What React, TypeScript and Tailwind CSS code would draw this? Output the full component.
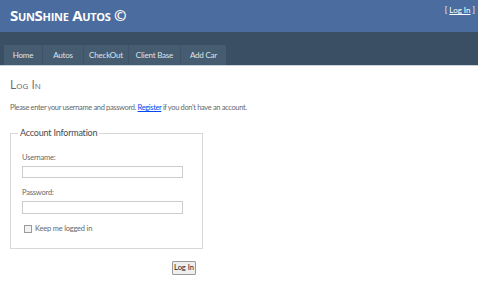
export default function App() {
  const tabs = ["Home", "Autos", "CheckOut", "Client Base", "Add Car"];
  const tabWidths = ["w-[38px]", "w-[41px]", "w-[45px]", "w-[52px]", "w-[46px]"];

  return (
    <div className="w-[478px] h-[291px] bg-white overflow-hidden font-['Lato',sans-serif]">
      {/* header */}
      <div className="h-[32px] bg-[#4b6c9e] flex justify-between">
        <h1 className="pl-[10px] pt-[6px] text-white font-bold text-[15px] leading-[18px] [font-variant:small-caps] tracking-[-0.3px] font-['Open_Sans',sans-serif]">
          SunShine Autos ©
        </h1>
        <div className="pr-[3px] pt-[5px] text-[8px] leading-[10px] text-white">
          [ <a className="underline">Log In</a> ]
        </div>
      </div>

      {/* menu */}
      <div className="h-[34px] bg-[#3a4f63] flex items-end pl-[4px] border-b border-[#c9d3de]">
        <div className="flex h-[20px] bg-[#465c71] rounded-tr-[2px]">
          {tabs.map((t, i) => (
            <div
              key={t}
              className={`${tabWidths[i]} h-full flex items-center justify-center text-[8px] tracking-[-0.2px] text-[#dde4ec] border-l border-[#3f5468] first:border-l-0`}
            >
              {t}
            </div>
          ))}
        </div>
      </div>

      {/* main */}
      <div className="pl-[10px] pt-[12px] text-[#666666]">
        <h2 className="text-[12px] leading-[14px] [font-variant:small-caps] text-[#666] font-['Open_Sans',sans-serif]">Log In</h2>
        <p className="mt-[11px] text-[7.5px] tracking-[-0.35px] leading-[10px] text-[#696969]">
          Please enter your username and password.{" "}
          <a className="underline text-[#034af3]">Register</a> if you don't have an account.
        </p>

        <fieldset className="mt-[15px] w-[193px] h-[121px] border border-[#d8d8d8] pl-[11px] pr-[19px] pt-[15px] m-0">
          <legend className="ml-[-4px] px-[2px] text-[9px] tracking-[-0.2px] text-[#4a4a4a] leading-[10px]">
            Account Information
          </legend>
          <div className="text-[7.5px] tracking-[-0.2px] leading-[9px] text-[#696969]">Username:</div>
          <div className="mt-[4px] h-[12px] w-[161px] border border-[#cccccc]"></div>
          <div className="mt-[10px] text-[7.5px] tracking-[-0.2px] leading-[9px] text-[#696969]">Password:</div>
          <div className="mt-[4px] h-[13px] w-[161px] border border-[#cccccc]"></div>
          <div className="mt-[10px] flex items-center gap-[3px] ml-[2px]">
            <div className="w-[8px] h-[8px] border border-[#9a9a9a] bg-[#f2f2f2]"></div>
            <span className="text-[7.5px] tracking-[-0.2px] leading-[9px] text-[#696969]">Keep me logged in</span>
          </div>
        </fieldset>

        <div className="w-[193px] flex justify-end pr-[7px] mt-[12px]">
          <button className="h-[14px] w-[24px] border border-[#999] bg-[#eeeeee] text-[7.5px] leading-[10px] text-[#222] rounded-[1px]">
            Log In
          </button>
        </div>
      </div>
    </div>
  );
}
